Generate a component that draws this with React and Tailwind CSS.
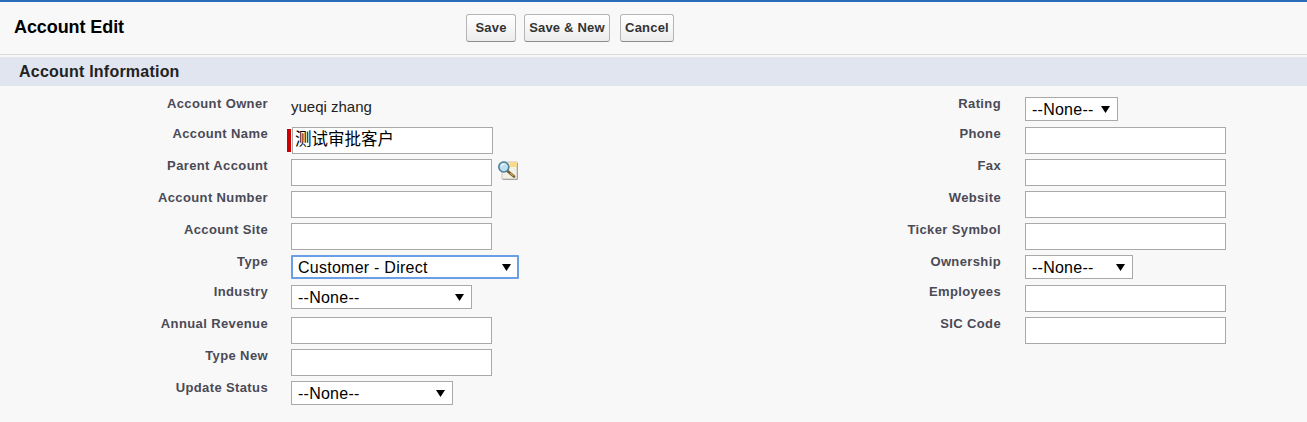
import React from "react";

const font = { arial: "font-['Liberation_Sans','Noto_Sans_CJK_SC',sans-serif]" };

const leftRows = [
  { label: "Account Owner", text: "yueqi zhang" },
  { label: "Account Name", input: true, required: true, value: "测试审批客户" },
  { label: "Parent Account", input: true, lookup: true },
  { label: "Account Number", input: true },
  { label: "Account Site", input: true },
  { label: "Type", select: "Customer - Direct", width: "w-[228px]", focused: true },
  { label: "Industry", select: "--None--", width: "w-[181px]", tall: true },
  { label: "Annual Revenue", input: true },
  { label: "Type New", input: true },
  { label: "Update Status", select: "--None--", width: "w-[162px]" },
];

const rightRows = [
  { label: "Rating", select: "--None--", width: "w-[93px]" },
  { label: "Phone", input: true },
  { label: "Fax", input: true },
  { label: "Website", input: true },
  { label: "Ticker Symbol", input: true },
  { label: "Ownership", select: "--None--", width: "w-[108px]" },
  { label: "Employees", input: true },
  { label: "SIC Code", input: true },
];

const LookupIcon = () => (
  <svg width="22" height="22" viewBox="0 0 22 22" className="ml-[5px]">
    <rect x="5" y="3" width="15" height="17" fill="#f4f1e4" stroke="#c4c4be" />
    <rect x="13" y="3" width="7" height="5" fill="#f8d98e" />
    <path d="M20.5 4v16.5H6" fill="none" stroke="#a5a5a5" />
    <path d="M10.5 12l6.5 5.5" stroke="#6b5a3a" strokeWidth="2.6" strokeLinecap="round" />
    <path d="M13 14l3.5 3" stroke="#d9a24a" strokeWidth="1.2" />
    <circle cx="6.8" cy="8" r="5" fill="#bfe0ee" stroke="#4d7f98" strokeWidth="1.6" />
    <path d="M4.3 7a3 3 0 0 1 3-2" fill="none" stroke="#ffffff" strokeWidth="1.2" />
  </svg>
);

const SelectBox = ({ value, width, focused }) => (
  <div className={`relative h-6 ${width}`}>
    <select
      defaultValue={value}
      className={`block h-6 w-full appearance-none bg-white pt-0.5 pl-1.5 text-base leading-none tracking-[0.25px] text-black outline-none ${
        focused
          ? "rounded-[1px] border-2 border-[#6a9fe8] pl-[5px]"
          : "border border-[#a9a9a9]"
      }`}
    >
      <option>{value}</option>
    </select>
    <svg width="9" height="7" viewBox="0 0 9 7" className="absolute right-[8px] top-[9px]">
      <path d="M0 0h9L4.5 7z" fill="#000" />
    </svg>
  </div>
);

const Row = ({ row, gap }) => (
  <div className={`flex ${row.input || row.tall ? "h-8" : "h-[30px]"}`}>
    <div className="w-[268px] shrink-0 pt-[2px] text-right text-[13px] leading-[15px] font-bold tracking-[0.38px] text-[#4a4a56]">
      {row.label}
    </div>
    <div className={`flex items-start pt-[3px] ${gap}`}>
      {row.text && <span className="pt-[1px] text-[15px] leading-[17px] text-[#222]">{row.text}</span>}
      {row.input && (
        <div className="flex items-start">
          {row.required && <div className="mt-[2px] -ml-1 mr-px h-[23px] w-1 shrink-0 bg-[#c00]" />}
          <input
            defaultValue={row.value}
            className={`block h-[27px] w-[201px] border border-[#a9a9a9] bg-white leading-none text-black outline-none ${
              row.required ? "pb-1.5 pl-0.5 text-[16.5px]" : "px-0.5 text-base"
            }`}
          />
          {row.lookup && <LookupIcon />}
        </div>
      )}
      {row.select && <SelectBox value={row.select} width={row.width} focused={row.focused} />}
    </div>
  </div>
);

export default function App() {
  return (
    <div className={`h-[422px] overflow-hidden border-t-2 border-[#2a6db8] bg-[#f8f8f8] ${font.arial}`}>
      {/* Header */}
      <div className="flex h-[53px] items-start border-b border-[#dcdcdc]">
        <h1 className="w-[466px] shrink-0 pt-[15px] pl-[14px] text-lg leading-[20px] font-bold tracking-[-0.08px] text-black">
          Account Edit
        </h1>
        <div className="flex pt-3">
          {[
            ["Save", "w-[50px] mr-2"],
            ["Save & New", "w-[86px] mr-2.5"],
            ["Cancel", "w-[54px]"],
          ].map(([name, cls]) => (
            <button
              key={name}
              className={`h-7 rounded-[3px] border border-[#b5b5b5] border-b-[#8c8c8c] bg-gradient-to-b from-white to-[#ededed] text-[13px] font-bold tracking-[0.2px] text-[#333] ${cls}`}
            >
              {name}
            </button>
          ))}
        </div>
      </div>

      {/* Section */}
      <div className="mt-0.5 h-[29px] bg-[#e1e5ef] pt-1.5 pl-[19px] text-base leading-[18px] font-bold tracking-[0.22px] text-[#222]">
        Account Information
      </div>

      <div className="flex pt-2">
        <div className="w-[733px] shrink-0">
          {leftRows.map((row) => (
            <Row key={row.label} row={row} gap="ml-[23px]" />
          ))}
        </div>
        <div className="flex-1">
          {rightRows.map((row) => (
            <Row key={row.label} row={row} gap="ml-6" />
          ))}
        </div>
      </div>
    </div>
  );
}
